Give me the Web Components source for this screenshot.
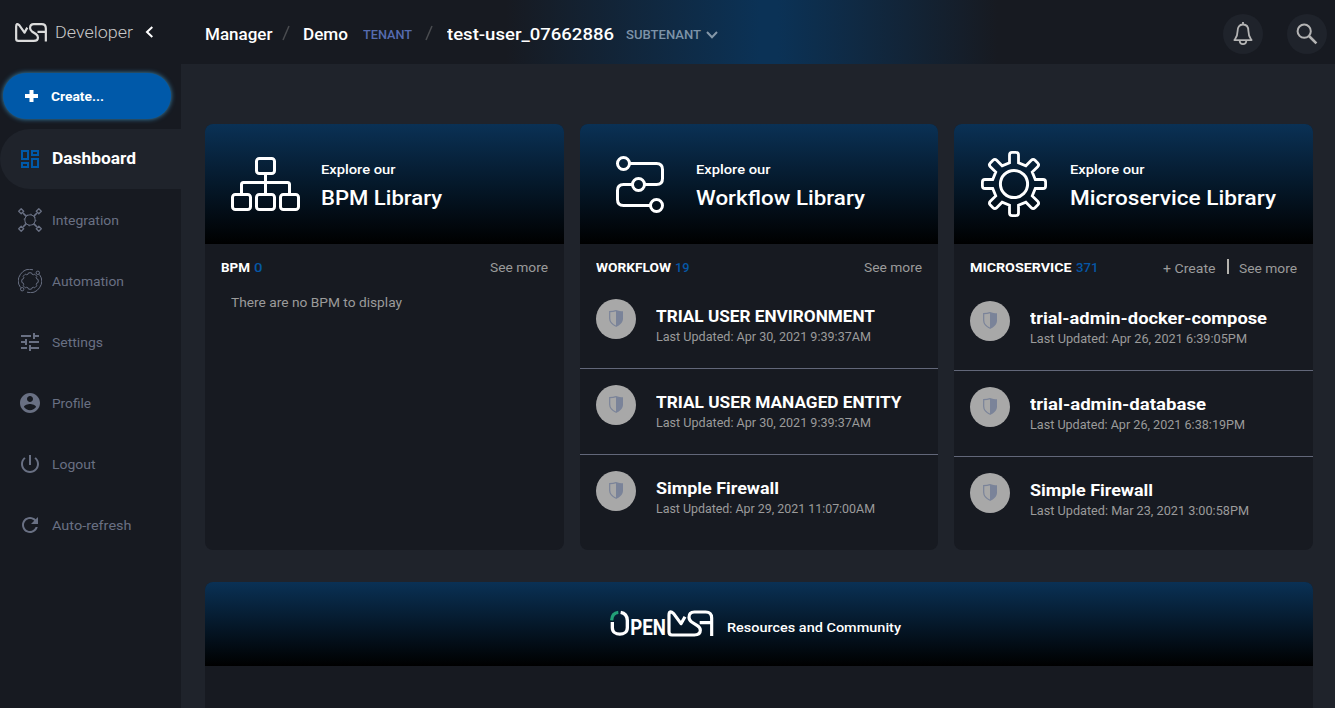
<!DOCTYPE html>
<html lang="en">
<head>
<meta charset="utf-8">
<title>MSA Developer</title>
<style>
html,body{margin:0;height:100%;overflow:hidden;background:#1f232b}
body{font-family:Roboto,"Liberation Sans",sans-serif;color:#fff}
</style>
</head>
<body>
<dev-console></dev-console>
<script>
const make = (name, html, setup) => customElements.define(name, class extends HTMLElement {
  constructor(){ super(); this.attachShadow({mode:'open'}); }
  connectedCallback(){
    if (this.ready) return;
    this.ready = true;
    const t = document.createElement('template');
    t.innerHTML = typeof html === 'function' ? html(this) : html;
    this.shadowRoot.append(t.content.cloneNode(true));
    if (setup) setup(this);
  }
});

const MARK = '<path d="M286 80L274 101L252 71Q238 58 238 76V126Q238 135 247 135H314Q332 135 332 121Q332 113 323 107L306 96Q298 90 298 82Q298 66 314 66H348Q366 66 366 84V138M330 98H366" fill="none" stroke="currentColor" stroke-width="9.500" stroke-linejoin="round"/>';

const gear = (cx, cy, n, hw, base, tip, r) => {
  let d = '';
  for (let i = 0; i < n; i++) {
    const a = i * 2 * Math.PI / n;
    const p = (x, y) => (cx + x*Math.cos(a) - y*Math.sin(a)).toFixed(2) + ' ' + (cy + x*Math.sin(a) + y*Math.cos(a)).toFixed(2);
    d += (i ? 'L' : 'M') + p(-hw,-base) + 'L' + p(-hw,-tip+r) + 'Q' + p(-hw,-tip) + ' ' + p(-hw+r,-tip) +
         'L' + p(hw-r,-tip) + 'Q' + p(hw,-tip) + ' ' + p(hw,-tip+r) + 'L' + p(hw,-base);
  }
  return d + 'Z';
};

const ICONS = {
  dashboard: '<path d="M4 4h6v8H4zM14 4h6v4h-6zM14 12h6v8h-6zM4 16h6v4H4z" fill="none" stroke="currentColor" stroke-width="2"/>',
  integration: '<g fill="none" stroke="currentColor" stroke-width="1"><circle cx="12" cy="12" r="5.2"/><circle cx="12" cy="12" r="5.8" stroke-dasharray="1.5 3"/><path d="M3.200.7L5.700 3.200L3.200 5.700L.7 3.200ZM20.800.7L23.300 3.200L20.800 5.700L18.300 3.200ZM3.200 18.300L5.700 20.800L3.200 23.300L.7 20.800ZM20.800 18.300L23.300 20.800L20.800 23.300L18.300 20.800Z" stroke-linejoin="round" stroke-width="1.300"/><path d="M5 5l3.300 3.300M19 5l-3.300 3.300M5 19l3.300-3.300M19 19l-3.300-3.300" stroke-width="1.700"/></g>',
  automation: '<g fill="none" stroke="currentColor" stroke-width="1"><path d="M15 .8A11.500 11.500 0 0 0 2.500 18.500M21.500 5.500A11.500 11.500 0 0 1 9 23.200"/><circle cx="19.800" cy="3.800" r="1.700"/><circle cx="4.200" cy="20.200" r="1.700"/><path d="' + gear(12,12,8,1.7,7,8.2,.5) + '"/></g>',
  settings: '<path d="M3 17v2h6v-2H3zM3 5v2h10V5H3zm10 16v-2h8v-2h-8v-2h-2v6h2zM7 9v2H3v2h4v2h2V9H7zm14 4v-2H11v2h10zm-6-4h2V7h4V5h-4V3h-2v6z"/>',
  profile: '<path d="M12 2C6.480 2 2 6.480 2 12s4.480 10 10 10 10-4.480 10-10S17.520 2 12 2zm0 3c1.660 0 3 1.340 3 3s-1.340 3-3 3-3-1.340-3-3 1.340-3 3-3zm0 14.200c-2.500 0-4.710-1.280-6-3.220.030-1.990 4-3.080 6-3.080 1.990 0 5.970 1.090 6 3.080-1.290 1.940-3.500 3.220-6 3.220z"/>',
  logout: '<path d="M13 3h-2v10h2V3zm4.830 2.170l-1.420 1.420C17.990 7.860 19 9.810 19 12c0 3.870-3.130 7-7 7s-7-3.130-7-7c0-2.190 1.010-4.140 2.580-5.420L6.170 5.170C4.230 6.820 3 9.260 3 12c0 4.970 4.030 9 9 9s9-4.030 9-9c0-2.740-1.230-5.180-3.170-6.830z"/>',
  refresh: '<path d="M17.650 6.350C16.200 4.900 14.210 4 12 4c-4.420 0-7.990 3.580-7.990 8s3.570 8 7.990 8c3.730 0 6.840-2.550 7.730-6h-2.080c-.820 2.330-3.040 4-5.650 4-3.310 0-6-2.690-6-6s2.690-6 6-6c1.660 0 3.140.690 4.220 1.780L13 11h7V4l-2.350 2.350z"/>',
  bell: '<path d="M12 0v3M12 3C8 3 6.600 6 6.600 9.500C6.600 14.500 5.500 15.500 3.400 18.600H20.600C18.500 15.500 17.400 14.500 17.400 9.500C17.400 6 16 3 12 3ZM8.700 19.500C9 23.600 15 23.600 15.300 19.500" fill="none" stroke="currentColor" stroke-width="1.800" stroke-linejoin="round" transform="translate(0 -.5)"/>',
  search: '<circle cx="9.200" cy="9.200" r="6.600" fill="none" stroke="currentColor" stroke-width="2"/><path d="M14 14L21.400 21.400" stroke="currentColor" stroke-width="2.600"/>',
  shield: '<path d="M12 3.600C9.600 4.300 7.500 4.500 5.700 4.600V11.500C5.700 15 8.500 17.500 12 19.200" fill="none" stroke="currentColor" stroke-width="1.200"/><path d="M12 3C14.400 4 16.700 4.200 19 4.200V11.500C19 15.500 16 18.300 12 20Z"/>'
};
const LARGE = {
  bpm: '<rect x="51.500" y="34.500" width="18" height="15" rx="2.800"/><rect x="27.500" y="70.500" width="18" height="15" rx="2.800"/><rect x="51.500" y="70.500" width="18" height="15" rx="2.800"/><rect x="75.500" y="70.500" width="18" height="15" rx="2.800"/><path d="M60.500 50V70M36.500 70V60.500Q36.500 58.500 38.500 58.500H82.500Q84.500 58.500 84.500 60.500V70"/>',
  workflow: '<circle cx="43.500" cy="39.500" r="6"/><circle cx="58.500" cy="60.500" r="6"/><circle cx="76.500" cy="81.500" r="6"/><path d="M50 39.500H76.500Q82.500 39.500 82.500 45.500V54.500Q82.500 60.500 76.500 60.500H65M52 60.500H43.500Q37.500 60.500 37.500 66.500V75.500Q37.500 81.500 43.500 81.500H70"/>',
  gear: '<circle cx="60" cy="60" r="13.600"/><path stroke-width="2.800" d="' + gear(60,60,8,4.5,21.3,31.6,2.6) + '"/>'
};

make('ui-icon', el => `<style>:host{display:inline-flex;flex:none;width:24px;height:24px}svg{width:100%;height:100%;fill:currentColor}</style>
<svg viewBox="0 0 24 24">${ICONS[el.getAttribute('name')]}</svg>`);

make('msa-mark', `<style>:host{display:block;flex:none}svg{display:block;width:100%;height:100%}</style>
<svg viewBox="233 61 138 79" preserveAspectRatio="none">${MARK}</svg>`);

make('nav-item', el => `<style>
:host{display:flex;align-items:center;height:60px;margin-bottom:1px;padding-left:18px;gap:10px;color:#697083;font-size:13px;line-height:20px}
ui-text{margin-top:2px}
:host([active]){background:#1f232b;border-radius:30px 0 0 30px;color:#fff;font-size:16px;font-weight:700}
:host([active]) ui-icon{color:#0059a9}
:host([active]) ui-text{margin-top:-1px}
</style><ui-icon name="${el.getAttribute('icon')}"></ui-icon><ui-text w="${el.getAttribute('w')}">${el.getAttribute('label')}</ui-text>`);

make('side-bar', `<style>
:host{display:flex;flex-direction:column;width:181px;flex:none;background:#171a21}
.brand{display:flex;align-items:center;height:64px;padding-left:15px;box-sizing:border-box}
msa-mark{width:32px;height:19px;color:#dcdcdc}
.brand ui-text{font-size:17.300px;font-weight:300;color:#c8c8c8;margin-left:7.500px}
.brand svg{margin-left:12.500px}
.create{display:flex;align-items:center;height:46px;margin:9px 10px 9px 3px;padding-left:22px;box-sizing:border-box;border-radius:23px;background:#0059a9;box-shadow:0 0 5px #3c8cb8;font-size:13px;font-weight:700}
.create ui-text{margin-left:13px}
nav{display:flex;flex-direction:column;padding-top:1px}
</style>
<div class="brand"><msa-mark></msa-mark><ui-text w="78">Developer</ui-text>
<svg width="9" height="12" viewBox="0 0 9 12"><path d="M7.300 1L2 6L7.300 11" fill="none" stroke="#fff" stroke-width="2"/></svg></div>
<div class="create"><svg width="13" height="12" viewBox="0 0 13 12"><path d="M6.500 0V12M0 6H13" stroke="#fff" stroke-width="4"/></svg><ui-text w="53">Create...</ui-text></div>
<nav>
<nav-item active icon="dashboard" label="Dashboard" w="84"></nav-item>
<nav-item icon="integration" label="Integration" w="67"></nav-item>
<nav-item icon="automation" label="Automation" w="72"></nav-item>
<nav-item icon="settings" label="Settings" w="51"></nav-item>
<nav-item icon="profile" label="Profile" w="39"></nav-item>
<nav-item icon="logout" label="Logout" w="43.500"></nav-item>
<nav-item icon="refresh" label="Auto-refresh" w="79.500"></nav-item>
</nav>`);

make('round-button', el => `<style>:host{display:flex;align-items:center;justify-content:center;width:40px;height:40px;border-radius:50%;background:#1f232b;color:#b4b4b4}</style>
<ui-icon name="${el.getAttribute('icon')}"></ui-icon>`);

make('top-bar', `<style>
:host{display:flex;align-items:center;height:64px;box-sizing:border-box;padding:4px 8px 0 24px;font-size:16px;font-weight:500;
background:linear-gradient(90deg,#171a2100 325px,#0b3256 579px,#0b3256 597px,#171a2100 817px),#171a21}
.tag{font-size:12px;color:#566cb0;margin-top:1px}
.sub{color:#7d93a8}
.slash{flex:none;width:8px;height:16px;margin-top:-2px}
.tools{display:flex;gap:24px;margin-left:auto}
</style>
<ui-text w="67.500">Manager</ui-text>
<svg class="slash" style="margin-left:9px" viewBox="0 0 8 16"><path d="M1 15L7 1" stroke="#4a4c50" stroke-width="1.500"/></svg>
<ui-text w="45" style="margin-left:13.500px">Demo</ui-text>
<ui-text class="tag" w="49" style="margin-left:15px">TENANT</ui-text>
<svg class="slash" style="margin-left:13px" viewBox="0 0 8 16"><path d="M1 15L7 1" stroke="#4a4c50" stroke-width="1.500"/></svg>
<ui-text w="167" style="margin-left:14px">test-user_07662886</ui-text>
<ui-text class="tag sub" w="75" style="margin-left:12px">SUBTENANT</ui-text>
<svg style="margin-left:5px;margin-top:1px" width="12" height="8" viewBox="0 0 12 8"><path d="M1 1L6 6.200L11 1" fill="none" stroke="#8497a8" stroke-width="2"/></svg>
<div class="tools"><round-button icon="bell"></round-button><round-button icon="search"></round-button></div>`);

make('list-row', el => `<style>
:host{display:flex;height:86px;box-sizing:border-box;padding:16px 16px 0;gap:20px;border-bottom:1px solid #626779}
:host(:last-child){border-bottom:0}
.avatar{display:flex;align-items:center;justify-content:center;width:40px;height:40px;border-radius:50%;background:#a8a8a8;color:#7a8399}
.copy{display:flex;flex-direction:column;padding-top:8px;line-height:20px}
.title{font-size:16px;font-weight:700}
.date{font-size:12.300px;color:#9b9b9b}
</style>
<div class="avatar"><ui-icon name="shield"></ui-icon></div>
<div class="copy"><ui-text class="title" w="${el.getAttribute('w')}">${el.getAttribute('label')}</ui-text>
<ui-text class="date" w="${el.getAttribute('dw')}">Last Updated: ${el.getAttribute('date')}</ui-text></div>`);

make('library-card', el => { const a = n => el.getAttribute(n); return `<style>
:host{display:block;height:426px;border-radius:8px;overflow:hidden;background:#171a21}
.head{display:flex;height:120px;background:linear-gradient(#0a3155,#000)}
.head svg{width:120px;height:120px;margin-right:-4px;fill:none;stroke:#fff;stroke-width:3}
.names{display:flex;flex-direction:column;padding-top:36px}
.small{font-size:13px;font-weight:500;line-height:20px}
.big{font-size:20.500px;font-weight:500;line-height:26px;margin-top:5px}
.bar{display:flex;justify-content:space-between;padding:8px 16px 0;height:31px;line-height:31px;font-size:13px;color:#9b9b9b}
.heading{display:flex;font-weight:700;color:#fff}
.count{color:#0657a6;font-weight:500;margin-left:4px}
.links{display:flex}
:host([wide]) .bar{height:33px}
:host([wide]) .links{padding-top:1px}
.rule{width:2px;height:15px;background:#b5b3ae;margin:6px 10px 0 11px}
</style>
<div class="head"><svg viewBox="0 0 120 120">${LARGE[a('icon')]}</svg><div class="names"><ui-text class="small" w="74.500">Explore our</ui-text><ui-text class="big" w="${a('tw')}">${a('label')}</ui-text></div></div>
<div class="bar"><div class="heading"><ui-text w="${a('kw')}">${a('kind')}</ui-text><ui-text class="count" w="${a('cw')}">${a('count')}</ui-text></div>
<div class="links">${el.hasAttribute('wide') ? '<ui-text w="52.500">+ Create</ui-text><span class="rule"></span>' : ''}<ui-text w="58">See more</ui-text></div></div>
<slot></slot>`; });

make('community-panel', `<style>
:host{display:block;height:126px;border-radius:8px 8px 0 0;overflow:hidden;background:#171a21}
.head{display:flex;justify-content:center;height:84px;padding-right:7px;background:linear-gradient(#0a3155,#000);font-size:13px;font-weight:500}
.logo{width:103px;height:27px;margin-top:28px;flex:none;overflow:visible}
ui-text{line-height:20px;margin:36px 0 0 14px}
</style>
<div class="head"><svg class="logo" viewBox="61 60 309 81">
<g fill="none" stroke="#fff" stroke-width="10"><path d="M66 91Q67 69 86 67" stroke="#22a077"/><path d="M68 96V113C68 139 113 139 113 113V91Q112 70 93 67"/></g>
<text x="122" y="136" fill="#fff" font-family="Roboto" font-weight="700" font-size="66" textLength="107" lengthAdjust="spacingAndGlyphs">PEN</text>
<g color="#fff">${MARK}</g></svg><ui-text w="174">Resources and Community</ui-text></div>`);

make('dev-console', `<style>
:host{display:flex;height:100vh}
main{flex:1;min-width:0}
.content{padding:60px 22px 0 24px}
.cards{display:grid;grid-template-columns:repeat(3,1fr);gap:16px;margin-bottom:32px}
.empty{font-size:13px;line-height:20px;color:#9b9b9b;margin:10px 0 0 26px}
</style>
<side-bar></side-bar>
<main><top-bar></top-bar><div class="content"><div class="cards">
<library-card icon="bpm" label="BPM Library" tw="121" kind="BPM" kw="29" count="0" cw="8.500"><ui-text class="empty" w="171">There are no BPM to display</ui-text></library-card>
<library-card icon="workflow" label="Workflow Library" tw="169" kind="WORKFLOW" kw="75" count="19" cw="14.500">
<list-row label="TRIAL USER ENVIRONMENT" w="219" date="Apr 30, 2021 9:39:37AM" dw="215"></list-row>
<list-row label="TRIAL USER MANAGED ENTITY" w="245.500" date="Apr 30, 2021 9:39:37AM" dw="215"></list-row>
<list-row label="Simple Firewall" w="123" date="Apr 29, 2021 11:07:00AM" dw="219"></list-row></library-card>
<library-card wide icon="gear" label="Microservice Library" tw="206" kind="MICROSERVICE" kw="101.500" count="371" cw="22.500">
<list-row label="trial-admin-docker-compose" w="237" date="Apr 26, 2021 6:39:05PM" dw="217"></list-row>
<list-row label="trial-admin-database" w="176" date="Apr 26, 2021 6:38:19PM" dw="215"></list-row>
<list-row label="Simple Firewall" w="123" date="Mar 23, 2021 3:00:58PM" dw="219"></list-row></library-card>
</div><community-panel></community-panel></div></main>`);

/* Single-line label whose glyphs are widened to the width given in "w".
   Registered last so that every label is styled before it is measured. */
make('ui-text', `<style>:host{display:inline-block;flex:none;white-space:nowrap}span{display:inline-block;transform-origin:0 50%}</style><span><slot></slot></span>`, el => {
  const w = parseFloat(el.getAttribute('w'));
  const span = el.shadowRoot.querySelector('span');
  const natural = span.getBoundingClientRect().width;
  if (w && natural) { el.style.width = w + 'px'; span.style.width = natural + 'px'; span.style.transform = 'scaleX(' + w / natural + ')'; }
});
</script>
</body>
</html>
